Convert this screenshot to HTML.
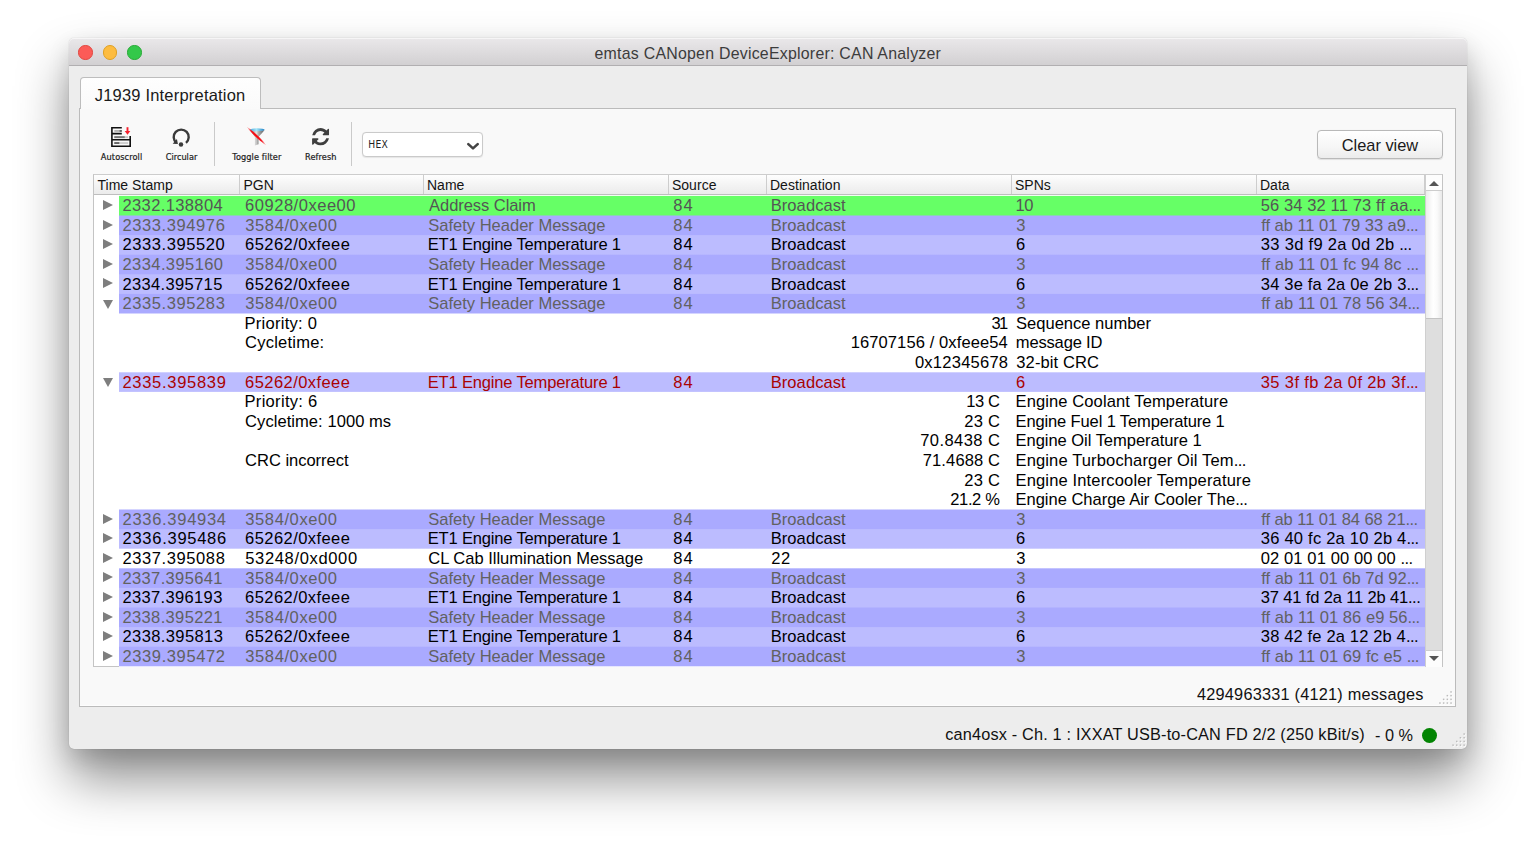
<!DOCTYPE html>
<html><head><meta charset="utf-8"><title>emtas CANopen DeviceExplorer: CAN Analyzer</title>
<style>
*{box-sizing:border-box;margin:0;padding:0}
html,body{width:1536px;height:847px;overflow:hidden;background:#fff}
body{position:relative;font-family:"Liberation Sans",sans-serif;color:#000}
#win{position:absolute;left:68.5px;top:38.4px;width:1398.7px;height:710.2px;background:#ededed;border-radius:5px;
 box-shadow:0 0 1px rgba(0,0,0,.3),0 30px 52px rgba(0,0,0,.44),0 9px 22px rgba(0,0,0,.12);}
#tb{position:absolute;left:0;top:0;width:100%;height:27.3px;border-radius:5px 5px 0 0;
 background:linear-gradient(#eae8ea,#d2d0d2);border-bottom:1px solid #b1afb1;box-shadow:inset 0 1px 0 #f6f5f6}
#tb .t{position:absolute;left:0;right:0;top:0;text-align:center;font-size:15.9px;line-height:29.5px;color:#3c3c3c;letter-spacing:.24px;padding-left:0px;top:.7px}
.tl{position:absolute;top:7.1px;width:14.4px;height:14.4px;border-radius:50%}
#pane{position:absolute;left:79px;top:108px;width:1377px;height:598.6px;background:#f9f9f9;border:1px solid #bbb;box-shadow:inset 0 -1px 0 #fdfdfd}
#tab{position:absolute;left:80px;top:77.3px;width:180.7px;height:31.7px;background:linear-gradient(#fefefe,#fafafa);border:1px solid #bdbdbd;border-bottom:none;border-radius:4px 4px 0 0;
 font-size:16.5px;line-height:34.4px;padding-left:13.7px;color:#1a1a1a;white-space:nowrap;letter-spacing:.2px}
/* toolbar */
.lbl{position:absolute;top:151px;-webkit-text-stroke:.2px #1c1c1c;font-family:"DejaVu Sans Condensed","DejaVu Sans",sans-serif;font-size:9.1px;line-height:12px;color:#1c1c1c;white-space:nowrap;text-align:center}
.sep{position:absolute;top:122.2px;width:1px;height:43.7px;background:#cacaca}
#combo{position:absolute;left:362.2px;top:132.3px;width:120.6px;height:25px;letter-spacing:.3px;background:#fff;border:1px solid #cacaca;border-radius:4px;
 font-family:"DejaVu Sans Condensed","DejaVu Sans",sans-serif;font-size:10.2px;line-height:23px;padding-left:5px;color:#222;box-shadow:0 .5px 1px rgba(0,0,0,.08)}
#clear{position:absolute;left:1317.3px;top:130.4px;width:125.3px;height:28.3px;border:1px solid #b9b9b9;border-radius:4px;background:linear-gradient(#ffffff,#f6f6f6 60%,#ececec);
 font-size:16.4px;line-height:28px;text-align:center;color:#1a1a1a;box-shadow:0 .5px 1px rgba(0,0,0,.1)}
/* table */
#table{position:absolute;left:93px;top:173.8px;width:1349.7px;height:493.5px;background:#fff;border:1px solid #c4c4c4;border-top-color:#cdcdcd}
#thead{position:absolute;left:94px;top:174.8px;width:1331px;height:20.2px;background:linear-gradient(#fefefe,#f5f5f5 45%,#ebebeb);border-bottom:1px solid #bebebe}
.th{position:absolute;top:0;height:19.2px;border-right:1px solid #cdcdcd;font-size:14px;line-height:21px;color:#141414;letter-spacing:.05px}
.th span{position:absolute;left:3.4px;top:0;white-space:nowrap}
.row{position:absolute;left:94px;width:1331px;font-size:16.55px;line-height:19.6px;white-space:nowrap}
.row .bg{position:absolute;left:25px;right:0;top:0;bottom:0}
.row .c{position:absolute;top:0.5px}
.el{letter-spacing:-.55px}
.green .bg{background:#66ff66}.green{color:#555}
.dark .bg{background:#aaaaff}.dark{color:#616161}
.light .bg{background:#bcbcff}
.red .bg{background:#bbbbff}.red{color:#aa0202}
.white .bg{background:#fff}
.ar{position:absolute;left:9px;top:4.1px;width:0;height:0;border-left:10.3px solid #7e7e7e;border-top:5.7px solid transparent;border-bottom:5.7px solid transparent}
.ad{position:absolute;left:8.6px;top:5.5px;width:0;height:0;border-top:9.6px solid #7e7e7e;border-left:5.4px solid transparent;border-right:5.4px solid transparent}
/* scrollbar */
#sb{position:absolute;left:1425px;top:174.8px;width:17.2px;height:491.9px;background:#dedede;border-left:1px solid #cfcfcf}
#sb .up,#sb .dn{position:absolute;left:0;width:100%;height:16px;background:#fdfdfd}
#sb .up{top:0;border-bottom:1px solid #cdcdcd}
#sb .dn{bottom:0;height:17px;border-top:1px solid #cdcdcd}
#sb .thumb{position:absolute;left:0;top:16px;width:100%;height:128px;background:linear-gradient(90deg,#ededed,#fff 45%,#fafafa 70%,#e9e9e9);border-bottom:1px solid #c4c4c4}
#sb .up i{position:absolute;left:3.1px;top:6.1px;border-bottom:5.9px solid #555;border-left:5.2px solid transparent;border-right:5.2px solid transparent}
#sb .dn i{position:absolute;left:3.1px;top:5.4px;border-top:5.9px solid #555;border-left:5.2px solid transparent;border-right:5.2px solid transparent}
.st{position:absolute;font-size:16.3px;line-height:20px;white-space:nowrap;color:#111}
#dot{position:absolute;left:1422.1px;top:727.7px;width:15px;height:15px;border-radius:50%;background:#038403}
.grip{position:absolute;width:13px;height:13px;opacity:.55;
 background:radial-gradient(circle at 1px 1px,#aaa 0.8px,transparent 1.1px) 0 0/3.2px 3.2px;
 clip-path:polygon(100% 0,100% 100%,0 100%)}
</style></head><body>
<div id="win">
 <div id="tb"><div class="t">emtas CANopen DeviceExplorer: CAN Analyzer</div>
  <div class="tl" style="left:9.8px;background:#fc5b57;border:.5px solid #e2463f"></div>
  <div class="tl" style="left:34.4px;background:#fdbc40;border:.5px solid #dfa023"></div>
  <div class="tl" style="left:58.8px;background:#34c84a;border:.5px solid #27aa35"></div>
 </div>
</div>
<div id="pane"></div>
<div id="tab">J1939 Interpretation</div>

<!-- toolbar -->
<svg style="position:absolute;left:0;top:0;pointer-events:none" width="1536" height="847" viewBox="0 0 1536 847">
 <defs>
  <linearGradient id="fg" x1="0" x2="1"><stop offset="0" stop-color="#6f7275"/><stop offset=".42" stop-color="#e4e4e4"/><stop offset=".6" stop-color="#a9a9a9"/><stop offset="1" stop-color="#5f5f5f"/></linearGradient>
  <linearGradient id="fs" x1="0" x2="1"><stop offset="0" stop-color="#d8d8d8"/><stop offset=".5" stop-color="#c2c2c2"/><stop offset="1" stop-color="#8a8a8a"/></linearGradient>
  <linearGradient id="fb" x1="0" x2="1"><stop offset="0" stop-color="#4aa6dc"/><stop offset=".45" stop-color="#a4e6f8"/><stop offset="1" stop-color="#1a7fc6"/></linearGradient>
  <radialGradient id="rl"><stop offset="0" stop-color="#ff0000"/><stop offset=".55" stop-color="#f2101c" stop-opacity=".95"/><stop offset="1" stop-color="#ff3030" stop-opacity="0"/></radialGradient>
 </defs>
 <g transform="translate(111,127)">
  <path d="M0.9 0.7H10.8M0.9 6.6H10.8M0.9 12.8H19.2M0.9 19.2H19.2M0.9 0V19.9M19.2 9V19.9" stroke="#111" stroke-width="1.6" fill="none"/>
  <rect x="3.3" y="3" width="7.5" height="1.9" fill="#b5b5b5"/><rect x="8.6" y="3" width="2.2" height="1.9" fill="#666"/>
  <rect x="3.3" y="9.2" width="13.8" height="1.9" fill="#c8c8c8"/><rect x="3.3" y="9.2" width="10.4" height="1.9" fill="#777"/>
  <rect x="3.3" y="15.1" width="13.8" height="1.9" fill="#cfcfcf"/><rect x="3.3" y="15.1" width="5" height="1.9" fill="#666"/>
  <path d="M16.5 0.2V4.6" stroke="#f5212d" stroke-width="1.9"/><path d="M13.7 4.1H19.3L16.5 7.7Z" fill="#f5212d"/>
 </g>
 <!-- circular -->
 <path d="M186.0 142.85A7.5 7.5 0 1 0 176.4 142.85" stroke="#3a3a3a" stroke-width="2.4" fill="none"/>
 <path d="M172.7 143.8L176.9 139.0L177.9 144.0Z" fill="#3a3a3a"/>
 <circle cx="181.0" cy="144.4" r="2.25" fill="#3a3a3a"/>
 <!-- filter -->
 <path d="M250.2 130.2L254.9 136.9H258.5L264.5 130.2Z" fill="url(#fg)"/>
 <path d="M254.9 136.7V145.4L258.5 144.3V136.7Z" fill="url(#fs)"/>
 <ellipse cx="257.3" cy="129.8" rx="7.3" ry="1.5" fill="url(#fb)"/>
 <ellipse cx="256.5" cy="136.05" rx="13.4" ry="1.55" fill="url(#rl)" transform="rotate(43.6 256.5 136.05)"/>
 <!-- refresh -->
 <svg x="312.05" y="128.1" width="17.1" height="17.35" viewBox="128 128 1536 1536" preserveAspectRatio="none">
  <path fill="#3f3f3f" d="M1639 1056q0 5-1 7-64 268-268 434.500t-478 166.500q-146 0-282.500-55t-243.500-157l-129 129q-19 19-45 19t-45-19-19-45v-448q0-26 19-45t45-19h448q26 0 45 19t19 45-19 45l-137 137q71 66 161 102t187 36q134 0 250-65t186-179q11-17 53-117 8-23 30-23h192q13 0 22.500 9.500t9.500 22.500zm25-800v448q0 26-19 45t-45 19h-448q-26 0-45-19t-19-45 19-45l138-138q-148-137-349-137-134 0-250 65t-186 179q-11 17-53 117-8 23-30 23h-199q-13 0-22.500-9.500t-9.500-22.500v-7q65-268 270-434.500t480-166.500q146 0 284 55.500t245 156.500l130-129q19-19 45-19t45 19 19 45z"/>
 </svg>
<g id="grips"><rect x="1451.1" y="703.1" width="1.5" height="1.5" fill="#fff"/><rect x="1450.3" y="702.3" width="1.5" height="1.5" fill="#bcbcbc"/><rect x="1447.4" y="703.1" width="1.5" height="1.5" fill="#fff"/><rect x="1446.6" y="702.3" width="1.5" height="1.5" fill="#bcbcbc"/><rect x="1443.7" y="703.1" width="1.5" height="1.5" fill="#fff"/><rect x="1442.9" y="702.3" width="1.5" height="1.5" fill="#bcbcbc"/><rect x="1440.0" y="703.1" width="1.5" height="1.5" fill="#fff"/><rect x="1439.2" y="702.3" width="1.5" height="1.5" fill="#bcbcbc"/><rect x="1451.1" y="699.4" width="1.5" height="1.5" fill="#fff"/><rect x="1450.3" y="698.6" width="1.5" height="1.5" fill="#bcbcbc"/><rect x="1447.4" y="699.4" width="1.5" height="1.5" fill="#fff"/><rect x="1446.6" y="698.6" width="1.5" height="1.5" fill="#bcbcbc"/><rect x="1443.7" y="699.4" width="1.5" height="1.5" fill="#fff"/><rect x="1442.9" y="698.6" width="1.5" height="1.5" fill="#bcbcbc"/><rect x="1451.1" y="695.7" width="1.5" height="1.5" fill="#fff"/><rect x="1450.3" y="694.9" width="1.5" height="1.5" fill="#bcbcbc"/><rect x="1447.4" y="695.7" width="1.5" height="1.5" fill="#fff"/><rect x="1446.6" y="694.9" width="1.5" height="1.5" fill="#bcbcbc"/><rect x="1451.1" y="692.0" width="1.5" height="1.5" fill="#fff"/><rect x="1450.3" y="691.2" width="1.5" height="1.5" fill="#bcbcbc"/><rect x="1464.2" y="745.2" width="1.5" height="1.5" fill="#fff"/><rect x="1463.4" y="744.4" width="1.5" height="1.5" fill="#bcbcbc"/><rect x="1460.5" y="745.2" width="1.5" height="1.5" fill="#fff"/><rect x="1459.7" y="744.4" width="1.5" height="1.5" fill="#bcbcbc"/><rect x="1456.8" y="745.2" width="1.5" height="1.5" fill="#fff"/><rect x="1456.0" y="744.4" width="1.5" height="1.5" fill="#bcbcbc"/><rect x="1453.1" y="745.2" width="1.5" height="1.5" fill="#fff"/><rect x="1452.3" y="744.4" width="1.5" height="1.5" fill="#bcbcbc"/><rect x="1464.2" y="741.5" width="1.5" height="1.5" fill="#fff"/><rect x="1463.4" y="740.7" width="1.5" height="1.5" fill="#bcbcbc"/><rect x="1460.5" y="741.5" width="1.5" height="1.5" fill="#fff"/><rect x="1459.7" y="740.7" width="1.5" height="1.5" fill="#bcbcbc"/><rect x="1456.8" y="741.5" width="1.5" height="1.5" fill="#fff"/><rect x="1456.0" y="740.7" width="1.5" height="1.5" fill="#bcbcbc"/><rect x="1464.2" y="737.8" width="1.5" height="1.5" fill="#fff"/><rect x="1463.4" y="737.0" width="1.5" height="1.5" fill="#bcbcbc"/><rect x="1460.5" y="737.8" width="1.5" height="1.5" fill="#fff"/><rect x="1459.7" y="737.0" width="1.5" height="1.5" fill="#bcbcbc"/><rect x="1464.2" y="734.1" width="1.5" height="1.5" fill="#fff"/><rect x="1463.4" y="733.3" width="1.5" height="1.5" fill="#bcbcbc"/></g>
</svg>
<div class="lbl" style="left:90.6px;width:62px;letter-spacing:.1px">Autoscroll</div>
<div class="lbl" style="left:150.5px;width:62px;letter-spacing:.02px">Circular</div>
<div class="sep" style="left:213.5px"></div>
<div class="lbl" style="left:225.9px;width:62px;letter-spacing:.1px">Toggle filter</div>
<div class="lbl" style="left:289.8px;width:62px;letter-spacing:.08px">Refresh</div>
<div class="sep" style="left:351.3px"></div>
<div id="combo">HEX
 <svg style="position:absolute;left:103px;top:8.4px" width="14" height="9" viewBox="0 0 14 9"><path d="M2.3 2.1L7 6.4L11.7 2.1" stroke="#444" stroke-width="2.6" fill="none" stroke-linecap="round" stroke-linejoin="round"/></svg>
</div>
<div id="clear">Clear view</div>

<div id="table"></div>
<div id="thead">
<div class="th" style="left:0.0px;width:146.0px"><span>Time Stamp</span></div>
<div class="th" style="left:146.0px;width:183.5px"><span>PGN</span></div>
<div class="th" style="left:329.5px;width:245.0px"><span>Name</span></div>
<div class="th" style="left:574.5px;width:98.0px"><span>Source</span></div>
<div class="th" style="left:672.5px;width:245.0px"><span>Destination</span></div>
<div class="th" style="left:917.5px;width:245.0px"><span>SPNs</span></div>
<div class="th" style="left:1162.5px;width:168.5px"><span>Data</span></div>
</div>
<div id="rowsbg" style="position:absolute;left:119px;top:195px;width:1306px;height:472px;background:linear-gradient(to bottom,#ffffff 0px,#ffffff 0.40px,#66ff66 1.40px,#66ff66 20.00px,#aaaaff 21.00px,#aaaaff 39.60px,#bcbcff 40.60px,#bcbcff 59.20px,#aaaaff 60.20px,#aaaaff 78.80px,#bcbcff 79.80px,#bcbcff 98.40px,#aaaaff 99.40px,#aaaaff 118.00px,#ffffff 119.00px,#ffffff 137.60px,#ffffff 138.60px,#ffffff 157.20px,#ffffff 158.20px,#ffffff 176.80px,#bcbcff 177.80px,#bcbcff 196.40px,#ffffff 197.40px,#ffffff 216.00px,#ffffff 217.00px,#ffffff 235.60px,#ffffff 236.60px,#ffffff 255.20px,#ffffff 256.20px,#ffffff 274.80px,#ffffff 275.80px,#ffffff 294.40px,#ffffff 295.40px,#ffffff 314.00px,#aaaaff 315.00px,#aaaaff 333.60px,#bcbcff 334.60px,#bcbcff 353.20px,#ffffff 354.20px,#ffffff 372.80px,#aaaaff 373.80px,#aaaaff 392.40px,#bcbcff 393.40px,#bcbcff 412.00px,#aaaaff 413.00px,#aaaaff 431.60px,#bcbcff 432.60px,#bcbcff 451.20px,#aaaaff 452.20px,#aaaaff 470.80px,#ffffff 471.80px)"></div>
<div class="row green" style="top:196px;height:20px"><i class="ar"></i><span class="c" style="top:-0.5px;left:28.5px;letter-spacing:0.36px">2332.138804</span><span class="c" style="top:-0.5px;left:151.1px;letter-spacing:0.51px">60928/0xee00</span><span class="c" style="top:-0.5px;left:335.1px;letter-spacing:-0.07px">Address Claim</span><span class="c" style="top:-0.5px;left:579.3px;letter-spacing:1.01px">84</span><span class="c" style="top:-0.5px;left:676.7px;letter-spacing:0.07px">Broadcast</span><span class="c" style="top:-0.5px;left:921.6px;letter-spacing:-0.48px">10</span><span class="c" style="top:-0.5px;left:1166.7px;letter-spacing:0.11px">56 34 32 11 73 ff aa<span class="el">...</span></span></div>
<div class="row dark" style="top:216px;height:19px"><i class="ar"></i><span class="c" style="top:-0.5px;left:28.5px;letter-spacing:0.58px">2333.394976</span><span class="c" style="top:-0.5px;left:151.3px;letter-spacing:0.59px">3584/0xe00</span><span class="c" style="top:-0.5px;left:334.3px;letter-spacing:-0.01px">Safety Header Message</span><span class="c" style="top:-0.5px;left:579.3px;letter-spacing:1.01px">84</span><span class="c" style="top:-0.5px;left:676.7px;letter-spacing:0.07px">Broadcast</span><span class="c" style="top:-0.5px;left:922.3px">3</span><span class="c" style="top:-0.5px;left:1167.2px;letter-spacing:-0.04px">ff ab 11 01 79 33 a9<span class="el">...</span></span></div>
<div class="row light" style="top:235px;height:20px"><i class="ar"></i><span class="c" style="top:-0.5px;left:28.5px;letter-spacing:0.57px">2333.395520</span><span class="c" style="top:-0.5px;left:151.1px;letter-spacing:0.42px">65262/0xfeee</span><span class="c" style="top:-0.5px;left:333.7px;letter-spacing:-0.17px">ET1 Engine Temperature 1</span><span class="c" style="top:-0.5px;left:579.3px;letter-spacing:1.01px">84</span><span class="c" style="top:-0.5px;left:676.7px;letter-spacing:0.07px">Broadcast</span><span class="c" style="top:-0.5px;left:922.1px">6</span><span class="c" style="top:-0.5px;left:1166.8px;letter-spacing:0.29px">33 3d f9 2a 0d 2b <span class="el">...</span></span></div>
<div class="row dark" style="top:255px;height:19px"><i class="ar"></i><span class="c" style="top:-0.5px;left:28.5px;letter-spacing:0.40px">2334.395160</span><span class="c" style="top:-0.5px;left:151.3px;letter-spacing:0.59px">3584/0xe00</span><span class="c" style="top:-0.5px;left:334.3px;letter-spacing:-0.01px">Safety Header Message</span><span class="c" style="top:-0.5px;left:579.3px;letter-spacing:1.01px">84</span><span class="c" style="top:-0.5px;left:676.7px;letter-spacing:0.07px">Broadcast</span><span class="c" style="top:-0.5px;left:922.3px">3</span><span class="c" style="top:-0.5px;left:1167.2px;letter-spacing:0.07px">ff ab 11 01 fc 94 8c <span class="el">...</span></span></div>
<div class="row light" style="top:274px;height:20px"><i class="ar"></i><span class="c" style="top:0.5px;left:28.5px;letter-spacing:0.33px">2334.395715</span><span class="c" style="top:0.5px;left:151.1px;letter-spacing:0.42px">65262/0xfeee</span><span class="c" style="top:0.5px;left:333.7px;letter-spacing:-0.17px">ET1 Engine Temperature 1</span><span class="c" style="top:0.5px;left:579.3px;letter-spacing:1.01px">84</span><span class="c" style="top:0.5px;left:676.7px;letter-spacing:0.07px">Broadcast</span><span class="c" style="top:0.5px;left:922.1px">6</span><span class="c" style="top:0.5px;left:1166.8px;letter-spacing:0.17px">34 3e fa 2a 0e 2b 3<span class="el">...</span></span></div>
<div class="row dark" style="top:294px;height:20px"><i class="ad"></i><span class="c" style="top:-0.5px;left:28.5px;letter-spacing:0.58px">2335.395283</span><span class="c" style="top:-0.5px;left:151.3px;letter-spacing:0.59px">3584/0xe00</span><span class="c" style="top:-0.5px;left:334.3px;letter-spacing:-0.01px">Safety Header Message</span><span class="c" style="top:-0.5px;left:579.3px;letter-spacing:1.01px">84</span><span class="c" style="top:-0.5px;left:676.7px;letter-spacing:0.07px">Broadcast</span><span class="c" style="top:-0.5px;left:922.3px">3</span><span class="c" style="top:-0.5px;left:1167.2px;letter-spacing:0.04px">ff ab 11 01 78 56 34<span class="el">...</span></span></div>
<div class="row det" style="top:314px;height:19px"><span class="c" style="top:-0.5px;left:150.5px;letter-spacing:0.26px">Priority: 0</span><span class="c r" style="top:-0.5px;right:418.6px;letter-spacing:-1.75px">31</span><span class="c" style="top:-0.5px;left:922.1px;letter-spacing:-0.01px">Sequence number</span></div>
<div class="row det" style="top:333px;height:20px"><span class="c" style="top:-0.5px;left:151.1px;letter-spacing:0.21px">Cycletime:</span><span class="c r" style="top:-0.5px;right:417.1px;letter-spacing:0.10px">16707156 / 0xfeee54</span><span class="c" style="top:-0.5px;left:921.8px;letter-spacing:-0.17px">message ID</span></div>
<div class="row det" style="top:353px;height:19px"><span class="c r" style="top:-0.5px;right:416.7px;letter-spacing:0.24px">0x12345678</span><span class="c" style="top:-0.5px;left:922.3px;letter-spacing:0.11px">32-bit CRC</span></div>
<div class="row red" style="top:372px;height:20px"><i class="ad"></i><span class="c" style="top:0.5px;left:28.5px;letter-spacing:0.68px">2335.395839</span><span class="c" style="top:0.5px;left:151.1px;letter-spacing:0.42px">65262/0xfeee</span><span class="c" style="top:0.5px;left:333.7px;letter-spacing:-0.17px">ET1 Engine Temperature 1</span><span class="c" style="top:0.5px;left:579.3px;letter-spacing:1.01px">84</span><span class="c" style="top:0.5px;left:676.7px;letter-spacing:0.07px">Broadcast</span><span class="c" style="top:0.5px;left:922.1px">6</span><span class="c" style="top:0.5px;left:1166.8px;letter-spacing:0.36px">35 3f fb 2a 0f 2b 3f<span class="el">...</span></span></div>
<div class="row det" style="top:392px;height:20px"><span class="c" style="top:-0.5px;left:150.5px;letter-spacing:0.30px">Priority: 6</span><span class="c r" style="top:-0.5px;right:425.5px;letter-spacing:-0.44px">13 C</span><span class="c" style="top:-0.5px;left:921.5px;letter-spacing:0.10px">Engine Coolant Temperature</span></div>
<div class="row det" style="top:412px;height:19px"><span class="c" style="top:-0.5px;left:151.1px;letter-spacing:0.05px">Cycletime: 1000 ms</span><span class="c r" style="top:-0.5px;right:424.8px;letter-spacing:0.25px">23 C</span><span class="c" style="top:-0.5px;left:921.5px;letter-spacing:-0.14px">Engine Fuel 1 Temperature 1</span></div>
<div class="row det" style="top:431px;height:20px"><span class="c r" style="top:-0.5px;right:424.6px;letter-spacing:0.44px">70.8438 C</span><span class="c" style="top:-0.5px;left:921.5px;letter-spacing:-0.04px">Engine Oil Temperature 1</span></div>
<div class="row det" style="top:451px;height:19px"><span class="c" style="top:-0.5px;left:151.1px;letter-spacing:-0.03px">CRC incorrect</span><span class="c r" style="top:-0.5px;right:424.9px;letter-spacing:0.12px">71.4688 C</span><span class="c" style="top:-0.5px;left:921.5px;letter-spacing:0.13px">Engine Turbocharger Oil Tem<span class="el">...</span></span></div>
<div class="row det" style="top:470px;height:20px"><span class="c r" style="top:0.5px;right:424.8px;letter-spacing:0.25px">23 C</span><span class="c" style="top:0.5px;left:921.5px;letter-spacing:0.14px">Engine Intercooler Temperature</span></div>
<div class="row det" style="top:490px;height:20px"><span class="c r" style="top:-0.5px;right:425.5px;letter-spacing:-0.37px">21.2 %</span><span class="c" style="top:-0.5px;left:921.5px;letter-spacing:-0.02px">Engine Charge Air Cooler The<span class="el">...</span></span></div>
<div class="row dark" style="top:510px;height:19px"><i class="ar"></i><span class="c" style="top:-0.5px;left:28.5px;letter-spacing:0.70px">2336.394934</span><span class="c" style="top:-0.5px;left:151.3px;letter-spacing:0.59px">3584/0xe00</span><span class="c" style="top:-0.5px;left:334.3px;letter-spacing:-0.01px">Safety Header Message</span><span class="c" style="top:-0.5px;left:579.3px;letter-spacing:1.01px">84</span><span class="c" style="top:-0.5px;left:676.7px;letter-spacing:0.07px">Broadcast</span><span class="c" style="top:-0.5px;left:922.3px">3</span><span class="c" style="top:-0.5px;left:1167.2px;letter-spacing:-0.06px">ff ab 11 01 84 68 21<span class="el">...</span></span></div>
<div class="row light" style="top:529px;height:20px"><i class="ar"></i><span class="c" style="top:-0.5px;left:28.5px;letter-spacing:0.72px">2336.395486</span><span class="c" style="top:-0.5px;left:151.1px;letter-spacing:0.42px">65262/0xfeee</span><span class="c" style="top:-0.5px;left:333.7px;letter-spacing:-0.17px">ET1 Engine Temperature 1</span><span class="c" style="top:-0.5px;left:579.3px;letter-spacing:1.01px">84</span><span class="c" style="top:-0.5px;left:676.7px;letter-spacing:0.07px">Broadcast</span><span class="c" style="top:-0.5px;left:922.1px">6</span><span class="c" style="top:-0.5px;left:1166.8px;letter-spacing:0.22px">36 40 fc 2a 10 2b 4<span class="el">...</span></span></div>
<div class="row white" style="top:549px;height:19px"><i class="ar"></i><span class="c" style="top:-0.5px;left:28.5px;letter-spacing:0.58px">2337.395088</span><span class="c" style="top:-0.5px;left:151.2px;letter-spacing:0.65px">53248/0xd000</span><span class="c" style="top:-0.5px;left:334.3px;letter-spacing:-0.02px">CL Cab Illumination Message</span><span class="c" style="top:-0.5px;left:579.3px;letter-spacing:1.01px">84</span><span class="c" style="top:-0.5px;left:677.3px;letter-spacing:0.47px">22</span><span class="c" style="top:-0.5px;left:922.3px">3</span><span class="c" style="top:-0.5px;left:1166.8px;letter-spacing:0.10px">02 01 01 00 00 00 <span class="el">...</span></span></div>
<div class="row dark" style="top:568px;height:20px"><i class="ar"></i><span class="c" style="top:0.5px;left:28.5px;letter-spacing:0.34px">2337.395641</span><span class="c" style="top:0.5px;left:151.3px;letter-spacing:0.59px">3584/0xe00</span><span class="c" style="top:0.5px;left:334.3px;letter-spacing:-0.01px">Safety Header Message</span><span class="c" style="top:0.5px;left:579.3px;letter-spacing:1.01px">84</span><span class="c" style="top:0.5px;left:676.7px;letter-spacing:0.07px">Broadcast</span><span class="c" style="top:0.5px;left:922.3px">3</span><span class="c" style="top:0.5px;left:1167.2px">ff ab 11 01 6b 7d 92<span class="el">...</span></span></div>
<div class="row light" style="top:588px;height:20px"><i class="ar"></i><span class="c" style="top:-0.5px;left:28.5px;letter-spacing:0.33px">2337.396193</span><span class="c" style="top:-0.5px;left:151.1px;letter-spacing:0.42px">65262/0xfeee</span><span class="c" style="top:-0.5px;left:333.7px;letter-spacing:-0.17px">ET1 Engine Temperature 1</span><span class="c" style="top:-0.5px;left:579.3px;letter-spacing:1.01px">84</span><span class="c" style="top:-0.5px;left:676.7px;letter-spacing:0.07px">Broadcast</span><span class="c" style="top:-0.5px;left:922.1px">6</span><span class="c" style="top:-0.5px;left:1166.8px;letter-spacing:-0.16px">37 41 fd 2a 11 2b 41<span class="el">...</span></span></div>
<div class="row dark" style="top:608px;height:19px"><i class="ar"></i><span class="c" style="top:-0.5px;left:28.5px;letter-spacing:0.34px">2338.395221</span><span class="c" style="top:-0.5px;left:151.3px;letter-spacing:0.59px">3584/0xe00</span><span class="c" style="top:-0.5px;left:334.3px;letter-spacing:-0.01px">Safety Header Message</span><span class="c" style="top:-0.5px;left:579.3px;letter-spacing:1.01px">84</span><span class="c" style="top:-0.5px;left:676.7px;letter-spacing:0.07px">Broadcast</span><span class="c" style="top:-0.5px;left:922.3px">3</span><span class="c" style="top:-0.5px;left:1167.2px;letter-spacing:0.04px">ff ab 11 01 86 e9 56<span class="el">...</span></span></div>
<div class="row light" style="top:627px;height:20px"><i class="ar"></i><span class="c" style="top:-0.5px;left:28.5px;letter-spacing:0.38px">2338.395813</span><span class="c" style="top:-0.5px;left:151.1px;letter-spacing:0.42px">65262/0xfeee</span><span class="c" style="top:-0.5px;left:333.7px;letter-spacing:-0.17px">ET1 Engine Temperature 1</span><span class="c" style="top:-0.5px;left:579.3px;letter-spacing:1.01px">84</span><span class="c" style="top:-0.5px;left:676.7px;letter-spacing:0.07px">Broadcast</span><span class="c" style="top:-0.5px;left:922.1px">6</span><span class="c" style="top:-0.5px;left:1166.8px;letter-spacing:0.14px">38 42 fe 2a 12 2b 4<span class="el">...</span></span></div>
<div class="row dark" style="top:647px;height:19px"><i class="ar"></i><span class="c" style="top:-0.5px;left:28.5px;letter-spacing:0.59px">2339.395472</span><span class="c" style="top:-0.5px;left:151.3px;letter-spacing:0.59px">3584/0xe00</span><span class="c" style="top:-0.5px;left:334.3px;letter-spacing:-0.01px">Safety Header Message</span><span class="c" style="top:-0.5px;left:579.3px;letter-spacing:1.01px">84</span><span class="c" style="top:-0.5px;left:676.7px;letter-spacing:0.07px">Broadcast</span><span class="c" style="top:-0.5px;left:922.3px">3</span><span class="c" style="top:-0.5px;left:1167.2px;letter-spacing:0.04px">ff ab 11 01 69 fc e5 <span class="el">...</span></span></div>
<div id="sb"><div class="up"><i></i></div><div class="thumb"></div><div class="dn"><i></i></div></div>

<div class="st" style="right:112.4px;top:683.5px;letter-spacing:.22px" id="msgs">4294963331 (4121) messages</div>
<div class="st" style="right:171.2px;top:724px;letter-spacing:.175px" id="conn">can4osx - Ch. 1 : IXXAT USB-to-CAN FD 2/2 (250 kBit/s)</div>
<div class="st" style="right:123px;top:725.3px" id="pct">- 0 %</div>
<div id="dot"></div>
</body></html>
